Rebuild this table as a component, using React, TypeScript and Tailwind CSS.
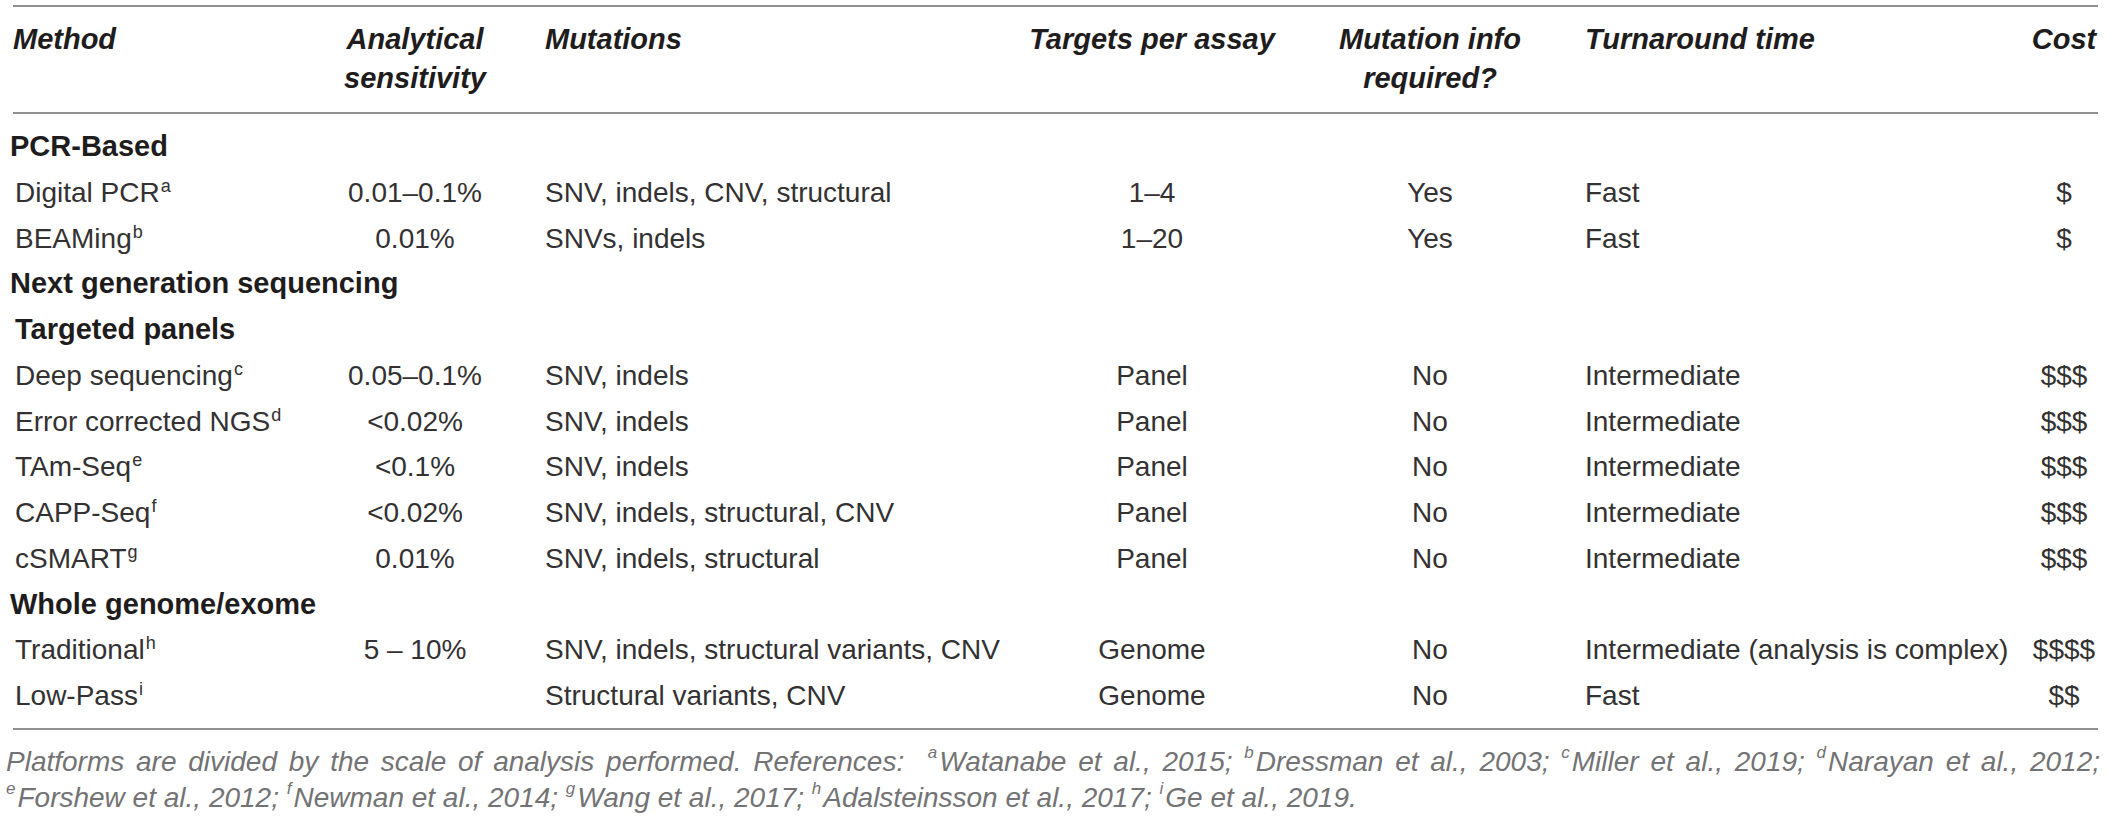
import React from "react";

const COLS = "grid grid-cols-[327px_150px_530px_264px_292px_454px_68px]";

function Sup({ children }: { children: React.ReactNode }) {
  return <span className="relative -top-[10px] text-[18px] leading-none ml-[1px]">{children}</span>;
}

function FSup({ children }: { children: React.ReactNode }) {
  return <span className="relative -top-[13px] text-[17px] leading-none mr-[2px]">{children}</span>;
}

type Row = {
  m: string;
  s: string;
  sens: string;
  mut: string;
  tgt: string;
  info: string;
  time: string;
  cost: string;
};

const rows: (Row | { section: string; indent?: boolean })[] = [
  { section: "PCR-Based" },
  { m: "Digital PCR", s: "a", sens: "0.01–0.1%", mut: "SNV, indels, CNV, structural", tgt: "1–4", info: "Yes", time: "Fast", cost: "$" },
  { m: "BEAMing", s: "b", sens: "0.01%", mut: "SNVs, indels", tgt: "1–20", info: "Yes", time: "Fast", cost: "$" },
  { section: "Next generation sequencing" },
  { section: "Targeted panels", indent: true },
  { m: "Deep sequencing", s: "c", sens: "0.05–0.1%", mut: "SNV, indels", tgt: "Panel", info: "No", time: "Intermediate", cost: "$$$" },
  { m: "Error corrected NGS", s: "d", sens: "<0.02%", mut: "SNV, indels", tgt: "Panel", info: "No", time: "Intermediate", cost: "$$$" },
  { m: "TAm-Seq", s: "e", sens: "<0.1%", mut: "SNV, indels", tgt: "Panel", info: "No", time: "Intermediate", cost: "$$$" },
  { m: "CAPP-Seq", s: "f", sens: "<0.02%", mut: "SNV, indels, structural, CNV", tgt: "Panel", info: "No", time: "Intermediate", cost: "$$$" },
  { m: "cSMART", s: "g", sens: "0.01%", mut: "SNV, indels, structural", tgt: "Panel", info: "No", time: "Intermediate", cost: "$$$" },
  { section: "Whole genome/exome" },
  { m: "Traditional", s: "h", sens: "5 – 10%", mut: "SNV, indels, structural variants, CNV", tgt: "Genome", info: "No", time: "Intermediate (analysis is complex)", cost: "$$$$" },
  { m: "Low-Pass", s: "i", sens: "", mut: "Structural variants, CNV", tgt: "Genome", info: "No", time: "Fast", cost: "$$" },
];

export default function App() {
  return (
    <div className="w-[2115px] h-[820px] bg-white overflow-hidden font-['Liberation_Sans',Arial,sans-serif] text-[#231f20]">
      <div className="ml-[13px] w-[2085px] pt-[5px]">
        <div className="h-[2px] bg-[#8f8f8f]" />
        <div className={COLS + " pt-[12.5px] pb-[14.5px] text-[29px] leading-[39px] font-bold italic text-[#1f1c1d]"}>
          <div>Method</div>
          <div className="text-center whitespace-nowrap">
            Analytical
            <br />
            sensitivity
          </div>
          <div className="pl-[55px]">Mutations</div>
          <div className="text-center whitespace-nowrap">Targets per assay</div>
          <div className="text-center whitespace-nowrap">
            Mutation info
            <br />
            required?
          </div>
          <div className="pl-[9px] whitespace-nowrap">Turnaround time</div>
          <div className="text-center">Cost</div>
        </div>
        <div className="h-[2px] bg-[#8f8f8f]" />
        <div className="pt-[10px] pb-[9.25px]">
          {rows.map((r, i) =>
            "section" in r ? (
              <div
                key={i}
                className={
                  r.indent
                    ? "h-[45.75px] leading-[45.75px] text-[29px] font-bold pl-[2px] whitespace-nowrap text-[#1f1c1d]"
                    : "h-[45.75px] leading-[45.75px] text-[29px] font-bold -ml-[3px] whitespace-nowrap text-[#1f1c1d]"
                }
              >
                {r.section}
              </div>
            ) : (
              <div key={i} className={COLS + " h-[45.75px] leading-[45.75px] text-[28px] whitespace-nowrap text-[#333132]"}>
                <div className="pl-[2px]">
                  {r.m}
                  <Sup>{r.s}</Sup>
                </div>
                <div className="text-center">{r.sens}</div>
                <div className="pl-[55px]">{r.mut}</div>
                <div className="text-center">{r.tgt}</div>
                <div className="text-center">{r.info}</div>
                <div className="pl-[9px]">{r.time}</div>
                <div className="text-center">{r.cost}</div>
              </div>
            )
          )}
        </div>
        <div className="h-[2px] bg-[#8f8f8f]" />
        <div className="-ml-[7px] w-[2094px] mt-[14px] text-[28px] leading-[36px] italic text-[#737375]">
          <p className="text-justify [text-align-last:justify]">
            Platforms are divided by the scale of analysis performed. References:&nbsp; <FSup>a</FSup>Watanabe et al., 2015;{" "}
            <FSup>b</FSup>Dressman et al., 2003; <FSup>c</FSup>Miller et al., 2019; <FSup>d</FSup>Narayan et al., 2012;
          </p>
          <p>
            <FSup>e</FSup>Forshew et al., 2012; <FSup>f</FSup>Newman et al., 2014; <FSup>g</FSup>Wang et al., 2017;{" "}
            <FSup>h</FSup>Adalsteinsson et al., 2017; <FSup>i</FSup>Ge et al., 2019.
          </p>
        </div>
      </div>
    </div>
  );
}
